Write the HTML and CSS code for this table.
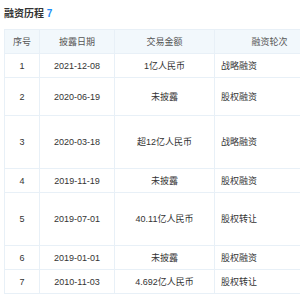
FILE: index.html
```html
<!DOCTYPE html>
<html lang="zh-CN">
<head>
  <meta charset="UTF-8">
  <meta name="viewport" content="width=device-width, initial-scale=1.0">
  <title>融资历程</title>
  <link rel="stylesheet" href="styles.css">
</head>
<body>

  <div class="panel">
    <h3 class="panel-title">融资历程 <span class="count">7</span></h3>

    <table class="finance-table">
      <colgroup>
        <col class="col-no">
        <col class="col-date">
        <col class="col-amount">
        <col class="col-round">
      </colgroup>
      <thead>
        <tr>
          <th>序号</th>
          <th>披露日期</th>
          <th>交易金额</th>
          <th>融资轮次</th>
        </tr>
      </thead>
      <tbody>
        <tr>
          <td>1</td>
          <td>2021-12-08</td>
          <td>1亿人民币</td>
          <td class="left">战略融资</td>
        </tr>
        <tr class="lines-2">
          <td>2</td>
          <td>2020-06-19</td>
          <td>未披露</td>
          <td class="left">股权融资</td>
        </tr>
        <tr class="lines-3">
          <td>3</td>
          <td>2020-03-18</td>
          <td>超12亿人民币</td>
          <td class="left">战略融资</td>
        </tr>
        <tr>
          <td>4</td>
          <td>2019-11-19</td>
          <td>未披露</td>
          <td class="left">股权融资</td>
        </tr>
        <tr class="lines-3">
          <td>5</td>
          <td>2019-07-01</td>
          <td>40.11亿人民币</td>
          <td class="left">股权转让</td>
        </tr>
        <tr>
          <td>6</td>
          <td>2019-01-01</td>
          <td>未披露</td>
          <td class="left">股权融资</td>
        </tr>
        <tr>
          <td>7</td>
          <td>2010-11-03</td>
          <td>4.692亿人民币</td>
          <td class="left">股权转让</td>
        </tr>
      </tbody>
    </table>
  </div>

</body>
</html>
```

FILE: styles.css
```css
html, body {
  margin: 0;
  padding: 0;
  overflow: hidden;
  background-color: #fff;
}
body {
  font-family: "Liberation Sans", "Noto Sans CJK SC", sans-serif;
  color: #333;
}
.panel {
  padding: 0 0 0 4px;
  width: 330px;
}
.panel-title {
  margin: 7px 0 8px 0;
  font-size: 10px;
  line-height: 14px;
  font-weight: bold;
  color: #333;
}
.count {
  color: #1d8cf8;
}
.finance-table {
  border-collapse: collapse;
  table-layout: fixed;
  width: 320px;
  font-size: 9px;
}
.col-no {
  width: 35px;
}
.col-date {
  width: 75px;
}
.col-amount {
  width: 100px;
}
.col-round {
  width: 110px;
}
.finance-table th,
.finance-table td {
  border: 1px solid #e8f0f7;
  height: 24px;
  padding: 0 6px;
  line-height: 14px;
  text-align: center;
  vertical-align: middle;
  font-weight: normal;
  box-sizing: border-box;
}
.finance-table th {
  background-color: #f2f8fc;
  color: #555;
}
.finance-table td.left {
  text-align: left;
}
.finance-table tr.lines-2 td {
  height: 38px;
}
.finance-table tr.lines-3 td {
  height: 53px;
}
```
